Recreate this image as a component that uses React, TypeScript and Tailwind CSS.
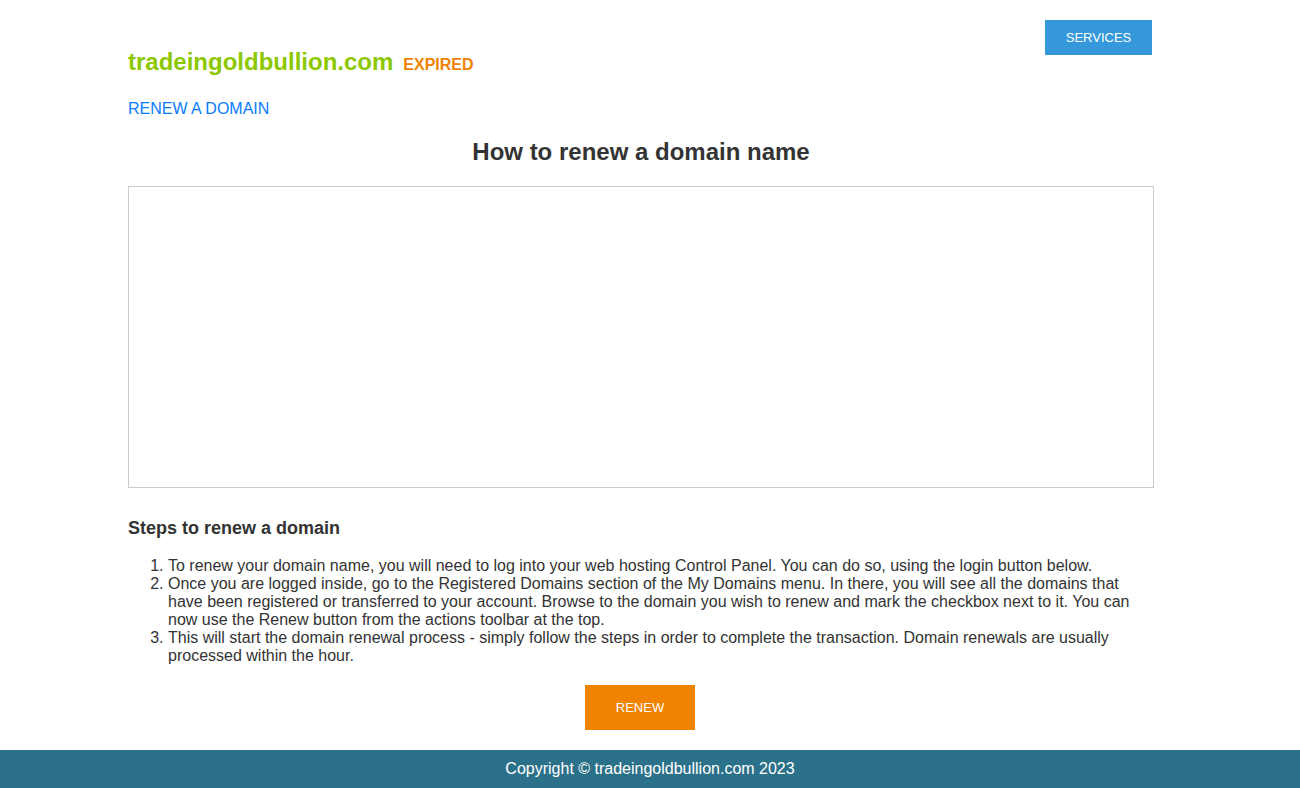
export default function App() {
  return (
    <div className="min-h-[788px] flex flex-col bg-white text-[#333]" style={{ fontFamily: '"Liberation Sans", Arial, sans-serif' }}>
      <div className="flex-1 w-[1026px] ml-[128px]">
        <div className="flex justify-between items-start">
          <div className="pt-[48px] flex items-baseline">
            <span className="text-[24px] leading-[28px] font-bold text-[#8cc800]">tradeingoldbullion.com</span>
            <span className="ml-[10px] text-[16px] font-bold text-[#f08300]">EXPIRED</span>
          </div>
          <a className="mt-[20px] mr-[2px] w-[107px] h-[35px] flex items-center justify-center bg-[#3498db] text-white text-[13px]">SERVICES</a>
        </div>
        <div className="mt-[23px] text-[16px] leading-[18px] text-[#0a7cff]">RENEW A DOMAIN</div>
        <h1 className="mt-[20px] text-center text-[24px] leading-[28px] font-bold">How to renew a domain name</h1>
        <div className="mt-[20px] h-[302px] border border-[#ccc]"></div>
        <h2 className="mt-[30px] text-[18px] leading-[20px] font-bold">Steps to renew a domain</h2>
        <ol className="mt-[19px] list-decimal pl-[40px] text-[16px] leading-[18px]">
          <li>To renew your domain name, you will need to log into your web hosting Control Panel. You can do so, using the login button below.</li>
          <li>Once you are logged inside, go to the Registered Domains section of the My Domains menu. In there, you will see all the domains that have been registered or transferred to your account. Browse to the domain you wish to renew and mark the checkbox next to it. You can now use the Renew button from the actions toolbar at the top.</li>
          <li>This will start the domain renewal process - simply follow the steps in order to complete the transaction. Domain renewals are usually processed within the hour.</li>
        </ol>
        <div className="mt-[20px] flex justify-center pr-[2px]">
          <a className="w-[110px] h-[45px] flex items-center justify-center bg-[#f08300] text-white text-[13px]">RENEW</a>
        </div>
      </div>
      <div className="mt-[20px] h-[38px] bg-[#2c718a] text-white text-[16px] flex items-center justify-center">Copyright © tradeingoldbullion.com 2023</div>
    </div>
  );
}
